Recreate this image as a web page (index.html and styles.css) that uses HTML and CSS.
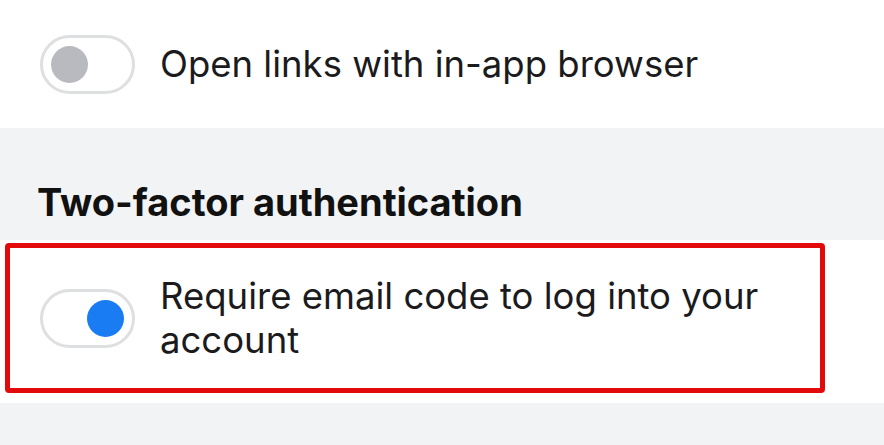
FILE: index.html
```html
<!DOCTYPE html>
<html lang="en">
<head>
<meta charset="utf-8">
<title>Settings</title>
<link rel="stylesheet" href="styles.css">
</head>
<body>
<div class="page">
  <div class="row row-top">
    <span class="toggle"><span class="knob"></span></span>
    <span class="label">Open links with in-app browser</span>
  </div>
  <div class="section-head">
    <h2 class="heading">Two-factor authentication</h2>
  </div>
  <div class="row-wrap">
    <div class="highlight">
      <span class="toggle on"><span class="knob"></span></span>
      <span class="label multi">Require email code to log into your account</span>
    </div>
  </div>
  <div class="footer-gap"></div>
</div>
</body>
</html>
```

FILE: styles.css
```css
* { box-sizing: border-box; }
html, body { margin: 0; padding: 0; }
body {
  width: 884px;
  height: 445px;
  overflow: hidden;
  background: #f2f3f5;
  font-family: Inter, "Noto Sans", sans-serif;
  color: #1b1b1d;
}
.page { display: flex; flex-direction: column; }
.row {
  display: flex;
  align-items: center;
  gap: 25px;
}
.row-top {
  height: 128px;
  background: #ffffff;
  padding-left: 40px;
}
.toggle {
  flex: none;
  width: 95px;
  height: 59px;
  border: 3px solid #dedfe1;
  border-radius: 30px;
  background: #fff;
  display: flex;
  align-items: center;
  padding: 0 8px;
}
.toggle .knob {
  width: 37px;
  height: 37px;
  border-radius: 50%;
  background: #b9b9c0;
}
.toggle.on { justify-content: flex-end; }
.toggle.on .knob { background: #1a7cf2; }
.label {
  font-size: 36.5px;
  line-height: 44px;
  letter-spacing: 0;
}
.section-head {
  height: 112px;
  display: flex;
  align-items: flex-end;
  padding: 0 0 16px 37px;
}
.heading {
  margin: 0;
  font-size: 38px;
  font-weight: 700;
  line-height: 44px;
  color: #111;
}
.row-wrap {
  height: 163px;
  background: #fff;
  padding: 3px 0 0 5px;
}
.highlight {
  width: 820px;
  height: 150px;
  border: 5px solid #e20a0a;
  border-radius: 4px;
  display: flex;
  align-items: center;
  gap: 25px;
  padding-left: 30px;
}
.multi { max-width: 640px; }
.footer-gap { flex: 1; }
```
